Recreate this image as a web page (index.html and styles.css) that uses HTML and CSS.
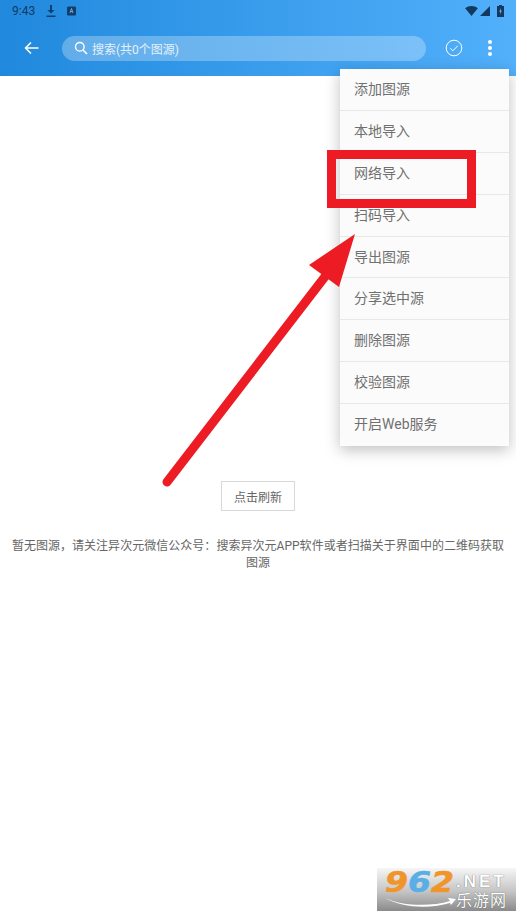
FILE: index.html
```html
<!DOCTYPE html>
<html lang="zh-CN">
<head>
    <meta charset="UTF-8">
    <title>图源管理</title>
    <link rel="stylesheet" href="styles.css">
</head>
<body>
    <div class="appbar">
        <div class="status">
            <span class="time">9:43</span>
            <svg class="st-icon" width="12" height="14" viewBox="0 0 12 14"><path d="M5 1h2v5h2.6L6 9.6 2.400 6H5zM1.500 11.500h9V13h-9z" fill="#0f3f6e"/></svg>
            <svg class="st-icon" width="10" height="10" viewBox="0 0 10 10"><rect width="9" height="9" y="0.500" rx="1" fill="#0f3f6e"/><path d="M3 7l1.500-4.500 1.500 4.500M3.600 5.600h1.800" fill="none" stroke="#8fb6d8" stroke-width=".8"/></svg>
            <span class="st-right">
                <svg width="13" height="10" viewBox="0 0 14 11"><path d="M0 2.500C4-.8 10-.8 14 2.500L7 11z" fill="#12395f"/></svg>
                <svg width="10" height="10" viewBox="0 0 11 11"><path d="M11 0v11H0z" fill="#12395f"/></svg>
                <svg class="battery" width="7" height="12" viewBox="0 0 7 12"><path d="M2 0h3v1h2v11H0V1h2z" fill="#12395f"/><path d="M4 3L2.300 6.500h1.200L3 9.500l1.800-3.700H3.600z" fill="#9cc9ee"/></svg>
            </span>
        </div>
        <div class="toolbar">
            <svg class="back" width="15" height="14" viewBox="0 0 15 14"><path d="M14.500 7H2M7 1.500L1.500 7 7 12.500" fill="none" stroke="#fff" stroke-width="1.500"/></svg>
            <div class="search">
                <svg width="14" height="14" viewBox="0 0 14 14"><circle cx="5.800" cy="5.800" r="4.300" fill="none" stroke="#fff" stroke-width="1.400"/><path d="M9 9l4 4" stroke="#fff" stroke-width="1.600"/></svg>
                <span>搜索(共0个图源)</span>
            </div>
            <svg class="check" width="18" height="18" viewBox="0 0 18 18"><circle cx="9" cy="9" r="7.800" fill="none" stroke="#fff" stroke-width="1"/><path d="M5.300 9.300l2.600 2.500 4.800-5" fill="none" stroke="#fff" stroke-width="1"/></svg>
            <div class="more"><i></i><i></i><i></i></div>
        </div>
    </div>

    <div class="content">
        <button class="refresh">点击刷新</button>
        <p class="empty">暂无图源，请关注异次元微信公众号：搜索异次元APP软件或者扫描关于界面中的二维码获取图源</p>
    </div>

    <ul class="menu">
        <li>添加图源</li>
        <li>本地导入</li>
        <li>网络导入</li>
        <li>扫码导入</li>
        <li>导出图源</li>
        <li>分享选中源</li>
        <li>删除图源</li>
        <li>校验图源</li>
        <li>开启Web服务</li>
    </ul>

    <!-- annotation drawn on top of the screenshot -->
    <div class="mark"></div>
    <svg class="arrow" width="516" height="917" viewBox="0 0 516 917">
        <path d="M167 482L327 274" stroke="#ed1c24" stroke-width="9" stroke-linecap="round" fill="none"/>
        <path d="M355 234L309 265L339 287z" fill="#ed1c24"/>
    </svg>

    <div class="watermark">
        <div class="wm-numbox"><span class="wm-num">9<b>6</b>2</span></div>
        <div class="wm-side">
            <span class="wm-net">.NET</span>
            <span class="wm-cn">乐游网</span>
        </div>
        <svg class="wm-swoosh" width="72" height="12" viewBox="0 0 72 12"><path d="M1 1C18 9 46 10 66 4L64 1L72 2L67 8L66 6C46 12 18 11 1 1z" fill="#fff"/></svg>
    </div>
</body>
</html>
```

FILE: styles.css
```css
* {
    box-sizing: border-box;
}
html, body {
    margin: 0;
    padding: 0;
}
body {
    width: 516px;
    height: 917px;
    overflow: hidden;
    position: relative;
    background: #fff;
    font-family: Roboto, "Noto Sans CJK SC", sans-serif;
    color: #666;
}
.appbar {
    height: 76px;
    background: linear-gradient(90deg, #2089dd, #52b0fb);
}
.status {
    height: 22px;
    padding: 0 12px;
    display: flex;
    align-items: center;
    gap: 10px;
    color: #12395f;
    font-size: 12px;
}
.st-icon {
    display: block;
}
.st-right {
    margin-left: auto;
    display: flex;
    align-items: center;
    gap: 2px;
}
.battery {
    margin-left: 5px;
}
.toolbar {
    height: 52px;
    display: flex;
    align-items: center;
    padding: 0 24px;
}
.back {
    margin-right: 23px;
}
.search {
    width: 364px;
    height: 25px;
    border-radius: 13px;
    background: rgba(255, 255, 255, 0.28);
    display: flex;
    align-items: center;
    gap: 4px;
    padding-left: 12px;
    font-size: 12px;
    color: #e3f1fd;
}
.check {
    margin-left: 19px;
}
.more {
    margin-left: 25px;
    width: 4px;
    display: flex;
    flex-direction: column;
    gap: 2px;
}
.more i {
    display: block;
    width: 4px;
    height: 4px;
    border-radius: 50%;
    background: #fff;
}
.content {
    padding-top: 405px;
    text-align: center;
}
.refresh {
    display: block;
    width: 74px;
    height: 30px;
    margin: 0 auto;
    padding: 0;
    background: #fff;
    border: 1px solid #d8d8d8;
    font: inherit;
    font-size: 12px;
    color: #666;
}
.empty {
    margin: 27px 0 0;
    padding: 0 10px;
    font-size: 12px;
    line-height: 17px;
    letter-spacing: 0.03px;
    color: #666;
}
.menu {
    position: absolute;
    left: 340px;
    top: 69px;
    width: 169px;
    margin: 0;
    padding: 0;
    list-style: none;
    background: #fbfbfb;
    box-shadow: 0 4px 14px rgba(0, 0, 0, 0.25);
}
.menu li {
    height: 41.900px;
    padding-left: 14px;
    line-height: 41px;
    font-size: 14px;
    color: #707070;
    border-bottom: 1px solid #e8e8e8;
}
.menu li:last-child {
    border-bottom: 0;
}
.mark {
    position: absolute;
    left: 327px;
    top: 150px;
    width: 149px;
    height: 58px;
    border: 9px solid #ed1c24;
}
.arrow {
    position: absolute;
    left: 0;
    top: 0;
}
.watermark {
    position: absolute;
    left: 377px;
    top: 868px;
    width: 139px;
    height: 43px;
    background: linear-gradient(180deg, #f6f6f6, #c4c4c4 55%, #8a8a8a);
    display: flex;
    padding-left: 8px;
}
.wm-numbox {
    width: 71px;
    height: 28px;
}
.wm-num {
    display: inline-block;
    font-family: "DejaVu Sans", sans-serif;
    font-size: 29px;
    line-height: 28px;
    font-weight: 700;
    font-style: italic;
    letter-spacing: 0;
    color: #f0952b;
    -webkit-text-stroke: 0.6px #f0952b;
    transform: scaleX(1.14);
    transform-origin: left center;
}
.wm-num b {
    color: #5aaee8;
    -webkit-text-stroke-color: #5aaee8;
}
.wm-side {
    display: flex;
    flex-direction: column;
    align-items: flex-start;
    padding-top: 5px;
    color: #fff;
    line-height: 1;
}
.wm-net {
    font-family: "Liberation Sans", sans-serif;
    font-size: 17px;
    font-weight: 700;
    letter-spacing: 3px;
    text-shadow: 0 0 1px #444;
}
.wm-cn {
    font-size: 16px;
    margin-top: 3px;
    letter-spacing: 1px;
    text-shadow: 0 0 1px #444;
}
.wm-swoosh {
    position: absolute;
    left: 7px;
    top: 29px;
}
```
